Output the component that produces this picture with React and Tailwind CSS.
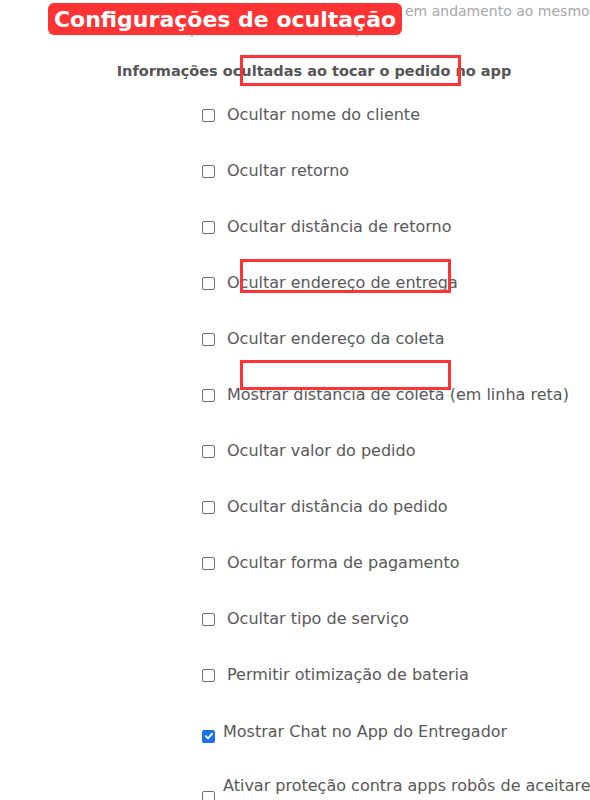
const options = [
  'Ocultar nome do cliente',
  'Ocultar retorno',
  'Ocultar distância de retorno',
  'Ocultar endereço de entrega',
  'Ocultar endereço da coleta',
  'Mostrar distância de coleta (em linha reta)',
  'Ocultar valor do pedido',
  'Ocultar distância do pedido',
  'Ocultar forma de pagamento',
  'Ocultar tipo de serviço',
  'Permitir otimização de bateria',
];

function Box({ checked }) {
  if (checked) {
    return (
      <span className="flex h-[13px] w-[13px] shrink-0 items-center justify-center rounded-[2px] bg-[#1a73e8]">
        <svg className="h-[10px] w-[10px]" viewBox="0 0 10 10" fill="none">
          <path d="M1.8 5.2l2.2 2.2 4.2-4.8" stroke="white" strokeWidth="1.8" strokeLinecap="round" strokeLinejoin="round" />
        </svg>
      </span>
    );
  }
  return <span className="block h-[13px] w-[13px] shrink-0 rounded-[2px] border border-[#6f6f6f] bg-white" />;
}

export default function App() {
  return (
    <div className="relative h-[800px] w-[590px] overflow-hidden bg-white font-['DejaVu_Sans',sans-serif] text-[#585858]">
      {/* texto da seção anterior, quase todo coberto pelo rótulo */}
      <div className="whitespace-nowrap pt-[2px] text-[14px] leading-[18px] text-[#a8a8a8]">
        <div className="pl-[405px]">em andamento ao mesmo tempo</div>
        <div className="pl-[190px]">pedidos ao mesmo tempo</div>
      </div>

      <h2 className="mt-[23px] pl-[38px] text-center text-[14.5px] font-bold leading-[20px] text-[#555]">
        Informações ocultadas ao tocar o pedido no app
      </h2>

      <div className="mt-[6px] pl-[202px]">
        {options.map((label) => (
          <label key={label} className="flex h-[56px] items-center gap-[12px] whitespace-nowrap text-[16px]">
            <Box />
            <span>{label}</span>
          </label>
        ))}
        <label className="flex h-[56px] items-center gap-[8px] whitespace-nowrap text-[16px]">
          <span className="mt-[10px]">
            <Box checked />
          </span>
          <span className="mt-[2px]">Mostrar Chat no App do Entregador</span>
        </label>
        <label className="flex items-center gap-[8px] pt-[16px] text-[16px]">
          <Box />
          <span className="whitespace-nowrap leading-[22px]">
            <span className="block">Ativar proteção contra apps robôs de aceitarem</span>
            <span className="block">pedidos automaticamente</span>
          </span>
        </label>
      </div>

      <div className="absolute left-[48px] top-[3px] flex h-[32px] w-[354px] items-center justify-center rounded-[6px] bg-[#fe3434] text-[22px] font-bold text-white">
        Configurações de ocultação
      </div>

      <div className="absolute left-[240px] top-[55px] h-[31px] w-[221px] border-[3px] border-[#f33]" />
      <div className="absolute left-[240px] top-[259px] h-[34px] w-[211px] border-[3px] border-[#f33]" />
      <div className="absolute left-[240px] top-[360px] h-[30px] w-[211px] border-[3px] border-[#f33]" />
    </div>
  );
}
